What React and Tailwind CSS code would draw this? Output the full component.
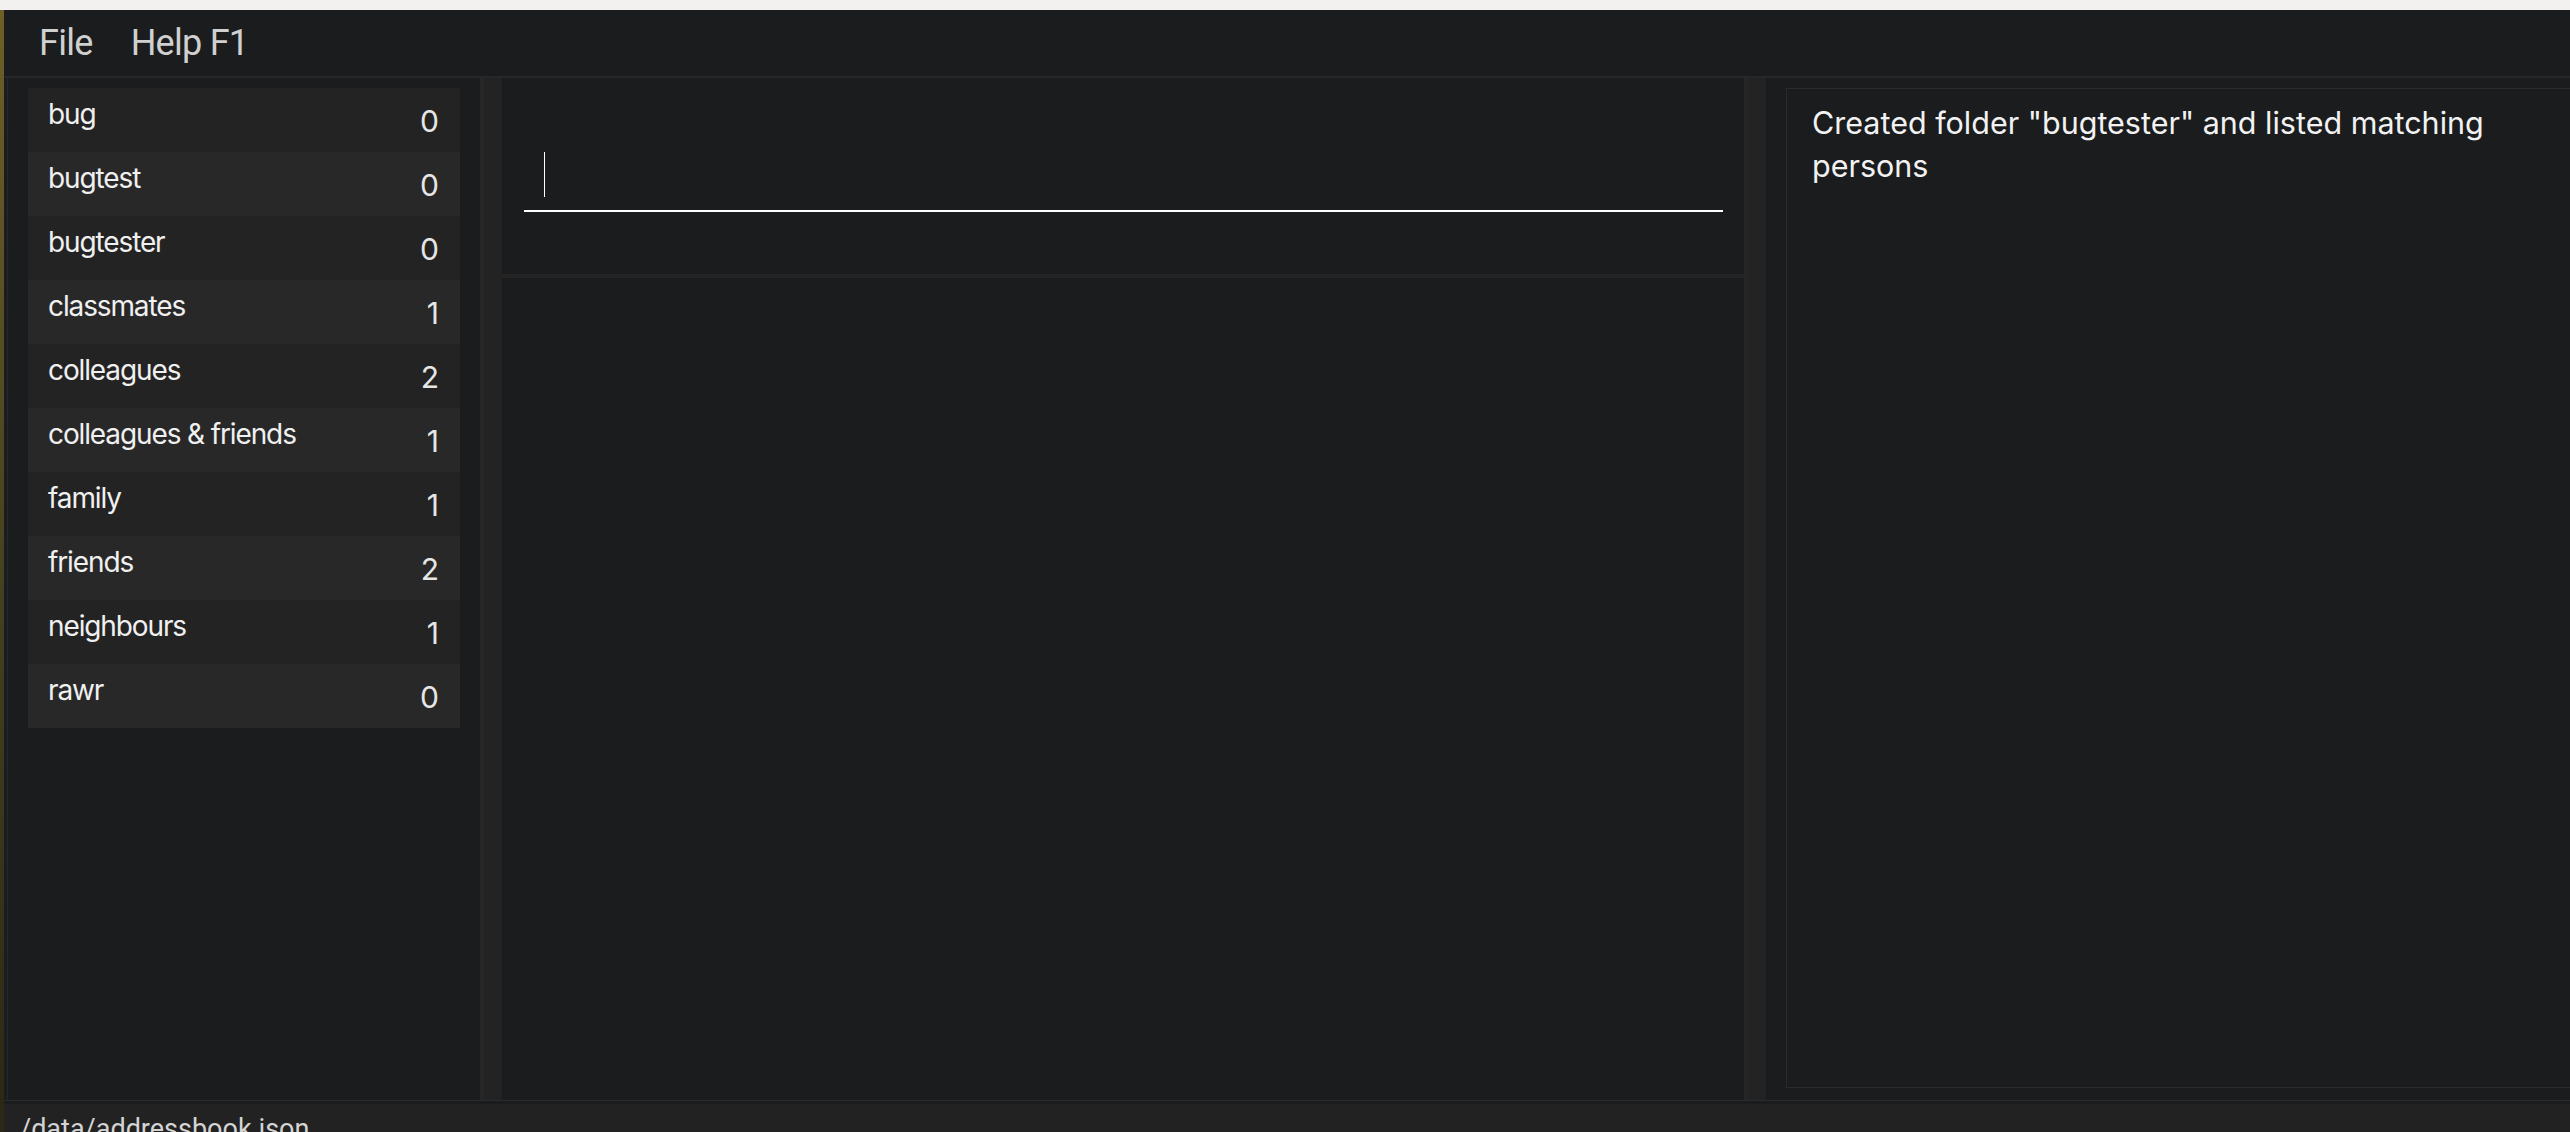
import React from "react";

const folders = [
  ["bug", 0],
  ["bugtest", 0],
  ["bugtester", 0],
  ["classmates", 1],
  ["colleagues", 2],
  ["colleagues & friends", 1],
  ["family", 1],
  ["friends", 2],
  ["neighbours", 1],
  ["rawr", 0],
];

function FolderRow({ name, count, index }) {
  const bg = index % 2 === 0 ? "bg-[#232323]" : "bg-[#282828]";
  return (
    <div className={`flex h-[64px] justify-between ${bg}`}>
      <div className="pl-[20px] pt-[10px] text-[28px] leading-[32px] tracking-[-0.04em] text-[#f0f0f0] font-['Inter',sans-serif]">
        {name}
      </div>
      <div className="pr-[21px] pt-[15px] text-[30px] leading-[36px] text-[#e6e6e6] font-['Inter',sans-serif]">
        {count}
      </div>
    </div>
  );
}

export default function App() {
  return (
    <div className="w-[2570px] h-[1132px] flex flex-col overflow-hidden bg-[#f2f1ef]">
      <div className="h-[10px] shrink-0 bg-[#f2f1ef]" />
      <div className="flex flex-1 min-h-0">
        <div className="w-[4px] shrink-0 bg-gradient-to-b from-[#6e5f28] via-[#454220] to-[#2a2816]" />
        <div className="flex-1 flex flex-col min-w-0 bg-[#1b1c1e]">
          {/* Menu bar */}
          <div className="h-[66px] shrink-0 flex items-center pl-[35px] gap-[38px] text-[36px] leading-[42px] tracking-[-0.02em] text-[#d0d0d0] font-['Roboto',sans-serif]">
            <span>File</span>
            <span>Help F1</span>
          </div>
          <div className="h-[2px] shrink-0 bg-[#26272a]" />

          {/* Main */}
          <div className="flex-1 flex min-h-0">
            {/* Left panel */}
            <div className="ml-[3px] w-[473px] shrink-0 border-l border-[#26272a] px-[20px] pt-[10px]">
              <div className="flex flex-col">
                {folders.map(([n, c], i) => (
                  <FolderRow key={n} name={n} count={c} index={i} />
                ))}
              </div>
            </div>
            <div className="w-[22px] shrink-0 border-l-[4px] border-[#272728] bg-[#232323]" />

            {/* Middle panel */}
            <div className="w-[1246px] shrink-0 flex flex-col border-r-[4px] border-[#252627]">
              <div className="h-[196px] shrink-0 pl-[22px] pr-[21px] pt-[60px]">
                <div className="h-[74px] flex items-end pb-[13px] pl-[20px] border-b-2 border-white">
                  <div className="w-px h-[45px] bg-white" />
                </div>
              </div>
              <div className="h-[4px] shrink-0 bg-[#242424]" />
              <div className="flex-1" />
            </div>
            <div className="w-[18px] shrink-0 bg-[#232323]" />

            {/* Right panel */}
            <div className="flex-1 min-w-0 overflow-hidden pl-[20px] pt-[10px] pb-[12px]">
              <div className="h-full w-[820px] border border-[#2a2b2e] pl-[25px] pt-[12px]">
                <p className="w-[740px] text-[30.5px] leading-[43px] text-[#f2f2f2] font-['Inter',sans-serif]">
                  Created folder "bugtester" and listed matching persons
                </p>
              </div>
            </div>
          </div>

          <div className="h-px shrink-0 bg-[#2a2b2d]" />
          <div className="h-[3px] shrink-0 bg-[#1b1c1e]" />
          {/* Status bar */}
          <div className="h-[28px] shrink-0 overflow-hidden bg-[#222222] pl-[16px] pt-[9px]">
            <div className="text-[27px] leading-[32px] text-[#d4d4d4] font-['Roboto',sans-serif] whitespace-nowrap">
              /data/addressbook.json
            </div>
          </div>
        </div>
      </div>
    </div>
  );
}
